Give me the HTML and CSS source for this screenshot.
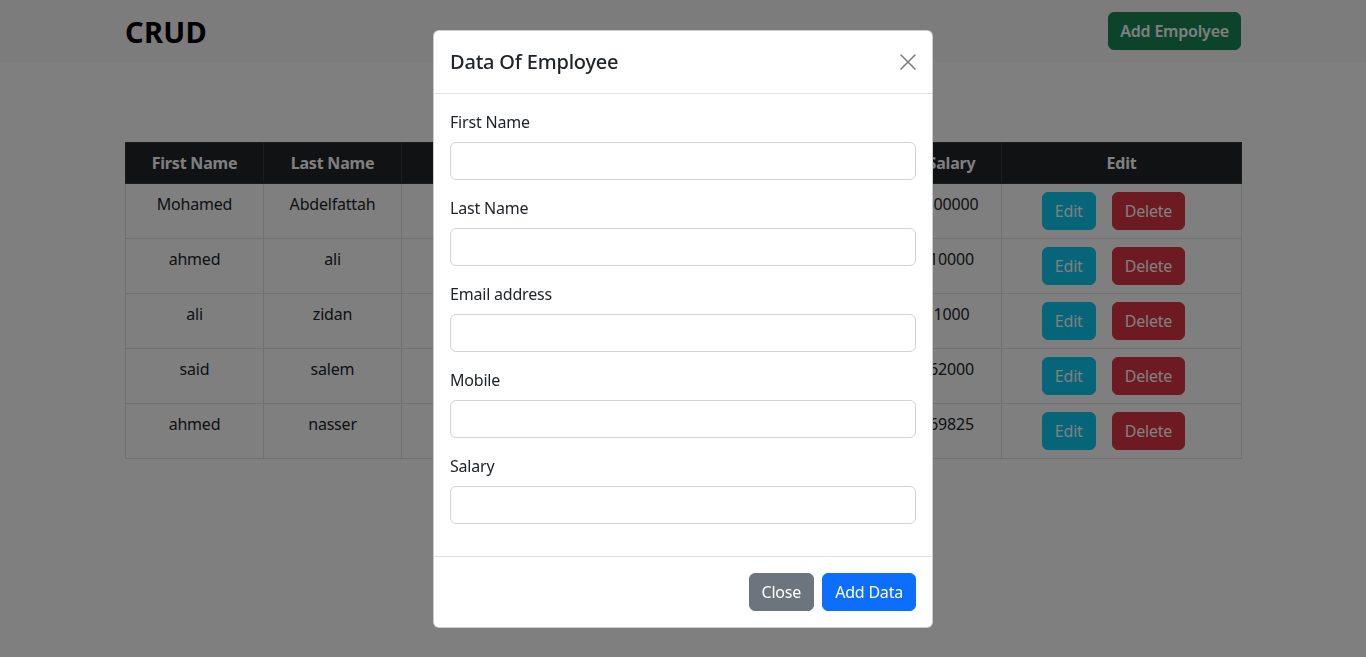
FILE: index.html
```html
<!DOCTYPE html>
<html lang="en">
<head>
<meta charset="utf-8">
<title>CRUD</title>
<link rel="stylesheet" href="styles.css">
</head>
<body>
<nav class="navbar">
  <div class="container nav-inner">
    <span class="brand">CRUD</span>
    <button class="btn btn-success">Add Empolyee</button>
  </div>
</nav>
<main class="container page">
  <table class="table">
    <colgroup>
      <col class="c-first"><col class="c-last"><col class="c-email"><col class="c-mobile"><col class="c-salary"><col class="c-edit">
    </colgroup>
    <thead>
      <tr><th>First Name</th><th>Last Name</th><th>Email</th><th>Mobile</th><th>Salary</th><th>Edit</th></tr>
    </thead>
    <tbody>
      <tr><td>Mohamed</td><td>Abdelfattah</td><td>mohamed@gmail.com</td><td>01012345678</td><td>500000</td><td class="actions"><button class="btn btn-info">Edit</button><button class="btn btn-danger">Delete</button></td></tr>
      <tr><td>ahmed</td><td>ali</td><td>ahmed@gmail.com</td><td>01123456789</td><td>10000</td><td class="actions"><button class="btn btn-info">Edit</button><button class="btn btn-danger">Delete</button></td></tr>
      <tr><td>ali</td><td>zidan</td><td>ali@gmail.com</td><td>01234567890</td><td>1000</td><td class="actions"><button class="btn btn-info">Edit</button><button class="btn btn-danger">Delete</button></td></tr>
      <tr><td>said</td><td>salem</td><td>said@gmail.com</td><td>01098765432</td><td>62000</td><td class="actions"><button class="btn btn-info">Edit</button><button class="btn btn-danger">Delete</button></td></tr>
      <tr><td>ahmed</td><td>nasser</td><td>nasser@gmail.com</td><td>01555555555</td><td>69825</td><td class="actions"><button class="btn btn-info">Edit</button><button class="btn btn-danger">Delete</button></td></tr>
    </tbody>
  </table>
</main>

<div class="backdrop"></div>
<div class="modal">
  <div class="modal-dialog">
    <div class="modal-header">
      <h5 class="modal-title">Data Of Employee</h5>
      <button class="btn-close" aria-label="Close">
        <svg viewBox="0 0 16 16" width="16" height="16"><path d="M1 1 L15 15 M15 1 L1 15" stroke="currentColor" stroke-width="1.6" stroke-linecap="round" fill="none"/></svg>
      </button>
    </div>
    <div class="modal-body">
      <div class="group"><label class="label">First Name</label><input class="input" type="text"></div>
      <div class="group"><label class="label">Last Name</label><input class="input" type="text"></div>
      <div class="group"><label class="label">Email address</label><input class="input" type="email"></div>
      <div class="group"><label class="label">Mobile</label><input class="input" type="text"></div>
      <div class="group"><label class="label">Salary</label><input class="input" type="text"></div>
    </div>
    <div class="modal-footer">
      <button class="btn btn-secondary">Close</button>
      <button class="btn btn-primary">Add Data</button>
    </div>
  </div>
</div>
</body>
</html>
```

FILE: styles.css
```css
* { box-sizing: border-box; }
html, body { margin: 0; }
body {
  font-family: "Noto Sans", "Open Sans", sans-serif;
  font-size: 16px;
  line-height: 1.5;
  letter-spacing: -0.2px;
  color: #212529;
  background: #fff;
}
.container { width: 1140px; margin: 0 auto; padding: 0 12px; }
.navbar { background: #f8f9fa; height: 62px; }
.nav-inner { height: 62px; display: flex; align-items: center; justify-content: space-between; }
.brand { font-size: 29px; font-weight: 700; line-height: 1.2; color: #000; margin-top: 2px; letter-spacing: 0.3px; }

.btn {
  font-family: inherit;
  font-size: 16px;
  line-height: 24px;
  letter-spacing: -0.2px;
  padding: 6px 12px;
  border: 1px solid transparent;
  border-radius: 6px;
  color: #fff;
  cursor: pointer;
}
.btn-success { background: #198754; border-color: #198754; font-weight: 600; padding: 6px 11px; }
.btn-info { background: #0dcaf0; border-color: #0dcaf0; }
.btn-danger { background: #dc3545; border-color: #dc3545; }
.btn-secondary { background: #6c757d; border-color: #6c757d; }
.btn-primary { background: #0d6efd; border-color: #0d6efd; }

.page { padding-top: 80px; }
.table { width: 100%; border-collapse: collapse; table-layout: fixed; }
.c-first, .c-last { width: 138px; }
.c-email { width: 300px; }
.c-mobile { width: 200px; }
.c-salary { width: 100px; }
.c-edit { width: 240px; }
.table th, .table td {
  border: 1px solid #dee2e6;
  padding: 8px;
  text-align: center;
  vertical-align: top;
}
.table th { background: #212529; color: #fff; font-weight: 700; border-color: #373b3e; }
.table td.actions { padding-right: 24px; }
.table td .btn { margin: 0 8px; }

.backdrop { position: fixed; inset: 0; background: rgba(0,0,0,.5); }
.modal { position: fixed; inset: 0; overflow: hidden; }
.modal-dialog {
  width: 500px;
  margin: 30px auto 0;
  background: #fff;
  border: 1px solid rgba(0,0,0,.2);
  border-radius: 6px;
}
.modal-header {
  display: flex;
  align-items: center;
  justify-content: space-between;
  padding: 16px;
  border-bottom: 1px solid #dee2e6;
}
.modal-title { margin: 0; font-size: 20px; font-weight: 500; line-height: 30px; }
.btn-close {
  border: 0;
  background: transparent;
  padding: 4px;
  width: 24px;
  height: 24px;
  color: #000;
  opacity: .5;
  display: flex;
  align-items: center;
  justify-content: center;
  margin-right: -4px;
}
.modal-body { padding: 16px; }
.group { margin-bottom: 16px; }
.label { display: block; margin-bottom: 8px; }
.input {
  display: block;
  width: 100%;
  height: 38px;
  border: 1px solid #ced4da;
  border-radius: 6px;
  padding: 6px 12px;
  font: inherit;
}
.modal-footer {
  display: flex;
  justify-content: flex-end;
  padding: 12px;
  border-top: 1px solid #dee2e6;
}
.modal-footer .btn { margin: 4px; }
```
